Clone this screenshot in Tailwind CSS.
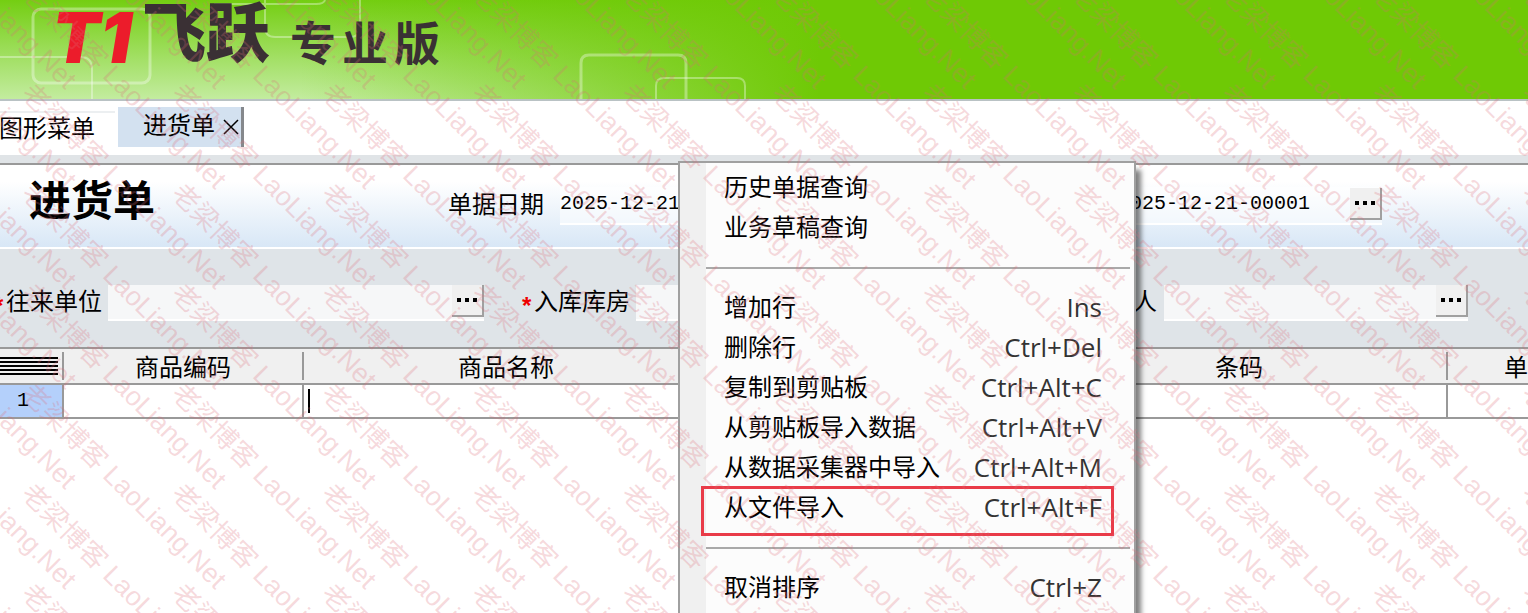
<!DOCTYPE html>
<html lang="zh-CN">
<head>
  <meta charset="UTF-8" />
  <meta name="viewport" content="width=device-width, initial-scale=1.0"/>
  <title>T1飞跃 专业版 - 进货单</title>
  <script src="https://cdn.jsdelivr.net/npm/@tailwindcss/browser@4"></script>
</head>
<body class="bg-white text-black text-[24px] leading-6 font-['Liberation_Sans','Noto_Sans_CJK_SC',sans-serif]">
  <div class="relative min-h-screen overflow-hidden">

    <!-- banner -->
    <header class="relative h-[101px] border-b-2 border-[#b9c2c4] bg-[linear-gradient(to_right,transparent_300px,#6fc905_820px),linear-gradient(to_bottom,#74ce12,#c3ec9f)]">
      <svg class="absolute left-0 top-0" width="760" height="99" fill="none" stroke="#fff" stroke-opacity=".35" stroke-width="3">
        <rect x="33" y="9" width="117" height="74" rx="8" />
        <path d="M0 57H80Q92 57 92 69V99" stroke-width="2" />
        <path d="M214 4H316Q324 4 325 0M265 0V27Q265 37 275 37H350Q360 37 360 27V0" stroke-width="2" />
        <path d="M581 99V63Q581 55 589 55H678Q686 55 686 63V99" />
        <path d="M656 99V86Q656 78 664 78H737Q745 78 745 86V99" stroke-width="2" />
      </svg>
      <h1 class="relative flex h-[72px] items-center pl-[52px] leading-[64px] whitespace-nowrap text-[#3a3034]">
        <span class="w-[90px] pt-1 text-[70px] font-black italic text-[#ec1c2b] font-['Inter',sans-serif]">T1</span>
        <span class="pb-4 text-[64px] font-black font-['Noto_Sans_CJK_SC',sans-serif]">飞跃</span>
        <span class="ml-5 flex gap-[6px] pt-2 text-[46px] font-bold font-['Noto_Sans_CJK_SC',sans-serif]"><span>专</span><span>业</span><span>版</span></span>
      </h1>
    </header>

    <!-- tabs -->
    <nav class="flex h-[54px] items-start gap-[3px] pt-[6px]">
      <a href="#" class="-ml-px mt-1 h-9 w-[116px] whitespace-nowrap border-t-2 border-[#eceff1] pt-1">图形菜单</a>
      <div class="flex h-10 w-[126px] items-center border-r-3 border-[#85888c] bg-[#d3e1f0] pl-[25px]">
        <a href="#" class="pb-[3px] whitespace-nowrap">进货单</a>
        <button type="button" aria-label="关闭" class="ml-2 flex size-4 items-center justify-center">
          <svg width="16" height="16" stroke="#000" stroke-width="1.5"><path d="M1 1L15 15M15 1L1 15" /></svg>
        </button>
      </div>
    </nav>

    <!-- title row -->
    <section class="flex h-[94px] items-start border-t-8 border-b-2 border-t-[#e0e4e7] border-b-white">
      <div class="flex h-full w-full items-start border-t-2 border-[#999] bg-linear-to-b from-white from-20% to-[#d8e7f6]">
        <h2 class="w-[448px] shrink-0 pl-[29px] pt-4 text-[42px] leading-[42px] font-bold">进货单</h2>
        <label for="billDate" class="w-[112px] shrink-0 pt-7">单据日期</label>
        <input id="billDate" type="text" value="2025-12-21" class="mt-[22px] h-[38px] w-[240px] shrink-0 border-b-2 border-white bg-white/50 pb-1 font-['Liberation_Mono',monospace] text-[20px]" />
        <div class="ml-[318px] mt-[22px] flex h-[38px] w-[264px] shrink-0 items-start border-b-2 border-white bg-white/50">
          <input type="text" aria-label="单据编号" value="2025-12-21-00001" class="h-8 min-w-0 flex-1 font-['Liberation_Mono',monospace] text-[20px]" />
          <button type="button" aria-label="选择编号" class="mt-px flex h-8 w-8 items-center justify-center gap-1 border-r-2 border-b-2 border-[#a0a0a0] bg-[#f0f0f0]">
            <i class="size-1 bg-black"></i><i class="size-1 bg-black"></i><i class="size-1 bg-black"></i>
          </button>
        </div>
      </div>
    </section>

    <!-- form row -->
    <section class="flex h-[98px] items-start bg-[#dfe4e8] pt-9">
      <label for="partner" class="-ml-[6px] flex w-[114px] shrink-0 pt-[5px] whitespace-nowrap"><span class="w-3 pt-1 font-bold text-[#e00]">*</span>往来单位</label>
      <div class="flex h-9 w-[376px] shrink-0 border-b-2 border-white bg-[#f6f7f8]">
        <input id="partner" type="text" class="min-w-0 flex-1" />
        <button type="button" aria-label="选择往来单位" class="flex h-8 w-8 items-center justify-center gap-1 border-r-2 border-b-2 border-[#a0a0a0] bg-[#f0f0f0]">
          <i class="size-1 bg-black"></i><i class="size-1 bg-black"></i><i class="size-1 bg-black"></i>
        </button>
      </div>
      <label for="store" class="ml-[38px] flex w-[114px] shrink-0 pt-[5px] whitespace-nowrap"><span class="w-3 pt-1 font-bold text-[#e00]">*</span>入库库房</label>
      <input id="store" type="text" class="h-9 w-[376px] shrink-0 border-b-2 border-white bg-[#f6f7f8]" />
      <label for="handler" class="ml-[121px] w-[31px] shrink-0 pt-[5px]">人</label>
      <div class="flex h-9 w-[304px] shrink-0 border-b-2 border-white bg-[#f6f7f8]">
        <input id="handler" type="text" class="min-w-0 flex-1" />
        <button type="button" aria-label="选择经手人" class="flex h-8 w-8 items-center justify-center gap-1 border-r-2 border-b-2 border-[#a0a0a0] bg-[#f0f0f0]">
          <i class="size-1 bg-black"></i><i class="size-1 bg-black"></i><i class="size-1 bg-black"></i>
        </button>
      </div>
    </section>

    <!-- detail grid -->
    <table class="w-full table-fixed border-separate border-spacing-0 border-t-2 border-[#999]">
      <colgroup>
        <col class="w-[64px]" /><col class="w-[240px]" /><col class="w-[406px]" /><col /><col class="w-[416px]" /><col class="w-[80px]" />
      </colgroup>
      <thead>
        <tr class="h-9 bg-[#f0f0f0]">
          <th class="border-b-2 border-[#999] p-0">
            <div class="flex h-7 flex-col justify-center gap-[2px] border-r-2 border-[#999] pr-1">
              <i class="h-[2px] bg-black"></i><i class="h-[2px] bg-black"></i><i class="h-[2px] bg-black"></i><i class="h-[2px] bg-black"></i><i class="h-[2px] bg-black"></i>
            </div>
          </th>
          <th class="border-b-2 border-[#999] p-0 font-normal"><div class="h-7 border-r-2 border-[#999] pt-1">商品编码</div></th>
          <th class="border-b-2 border-[#999] p-0 font-normal"><div class="h-7 border-r-2 border-[#999] pt-1">商品名称</div></th>
          <th class="border-b-2 border-[#999] p-0"></th>
          <th class="border-b-2 border-[#999] p-0 font-normal"><div class="h-7 border-r-2 border-[#999] pt-1">条码</div></th>
          <th class="border-b-2 border-[#999] p-0 text-right font-normal"><div class="h-7 pt-1">单</div></th>
        </tr>
      </thead>
      <tbody>
        <tr class="h-[34px]">
          <td class="border-r-2 border-b-2 border-[#999] bg-[#b4d0fb] p-0 pr-4 text-center font-['Liberation_Mono',monospace] text-[20px]">1</td>
          <td class="border-r-2 border-b-2 border-[#999] p-0"></td>
          <td class="border-r-2 border-b-2 border-[#999] p-0 pl-1"><div class="h-6 w-[2px] bg-black"></div></td>
          <td class="border-r-2 border-b-2 border-[#999] p-0"></td>
          <td class="border-r-2 border-b-2 border-[#999] p-0"></td>
          <td class="border-b-2 border-[#999] p-0"></td>
        </tr>
      </tbody>
    </table>

    <!-- context menu -->
    <div class="absolute left-[678px] top-[161px] -bottom-4 w-[458px] border-2 border-[#a0a0a0] bg-[#fcfcfc] shadow-[6px_8px_5px_-1px_rgba(0,0,0,0.5)]">
      <div class="h-full border-l-26 border-[#f0f0f0] pt-[5px]">
        <button type="button" class="flex h-10 w-full items-center pl-[18px]">历史单据查询</button>
        <button type="button" class="flex h-10 w-full items-center pl-[18px]">业务草稿查询</button>
        <div class="flex h-10 items-center pr-1"><hr class="w-full border-t-2 border-[#a9a9a9]" /></div>
        <button type="button" class="flex h-10 w-full items-center justify-between pl-[18px] pr-8">增加行<kbd class="pb-[2px] font-['Open_Sans',sans-serif] text-[26px] text-[#333]">Ins</kbd></button>
        <button type="button" class="flex h-10 w-full items-center justify-between pl-[18px] pr-8">删除行<kbd class="pb-[2px] font-['Open_Sans',sans-serif] text-[26px] text-[#333]">Ctrl+Del</kbd></button>
        <button type="button" class="flex h-10 w-full items-center justify-between pl-[18px] pr-8">复制到剪贴板<kbd class="pb-[2px] font-['Open_Sans',sans-serif] text-[26px] text-[#333]">Ctrl+Alt+C</kbd></button>
        <button type="button" class="flex h-10 w-full items-center justify-between pl-[18px] pr-8">从剪贴板导入数据<kbd class="pb-[2px] font-['Open_Sans',sans-serif] text-[26px] text-[#333]">Ctrl+Alt+V</kbd></button>
        <button type="button" class="flex h-10 w-full items-center justify-between pl-[18px] pr-8">从数据采集器中导入<kbd class="pb-[2px] font-['Open_Sans',sans-serif] text-[26px] text-[#333]">Ctrl+Alt+M</kbd></button>
        <div class="relative">
          <button type="button" class="flex h-10 w-full items-center justify-between pl-[18px] pr-8">从文件导入<kbd class="pb-[2px] font-['Open_Sans',sans-serif] text-[26px] text-[#333]">Ctrl+Alt+F</kbd></button>
          <div class="pointer-events-none absolute -left-[5px] -top-[2px] h-[50px] w-[413px] border-3 border-[#e93b48]"></div>
        </div>
        <div class="flex h-10 items-center pr-1"><hr class="w-full border-t-2 border-[#a9a9a9]" /></div>
        <button type="button" class="flex h-10 w-full items-center justify-between pl-[18px] pr-8">取消排序<kbd class="pb-[2px] font-['Open_Sans',sans-serif] text-[26px] text-[#333]">Ctrl+Z</kbd></button>
      </div>
    </div>

    <!-- watermark -->
    <svg id="watermark" aria-hidden="true" class="pointer-events-none absolute inset-0 h-full w-full fill-[#dc6c78]/26 text-[27px]"></svg>
  </div>

  <script>
    const mark = document.getElementById("watermark");
    // each line runs about 195px right and down from its start
    for (let y = -112; y < window.innerHeight; y += 100) {
      for (let x = -123; x < window.innerWidth; x += 150) {
        const t = document.createElementNS("http://www.w3.org/2000/svg", "text");
        t.setAttribute("transform", `translate(${x} ${y}) rotate(45)`);
        t.setAttribute("y", 10);
        t.textContent = "老梁博客 LaoLiang.Net";
        mark.appendChild(t);
      }
    }
  </script>
</body>
</html>
